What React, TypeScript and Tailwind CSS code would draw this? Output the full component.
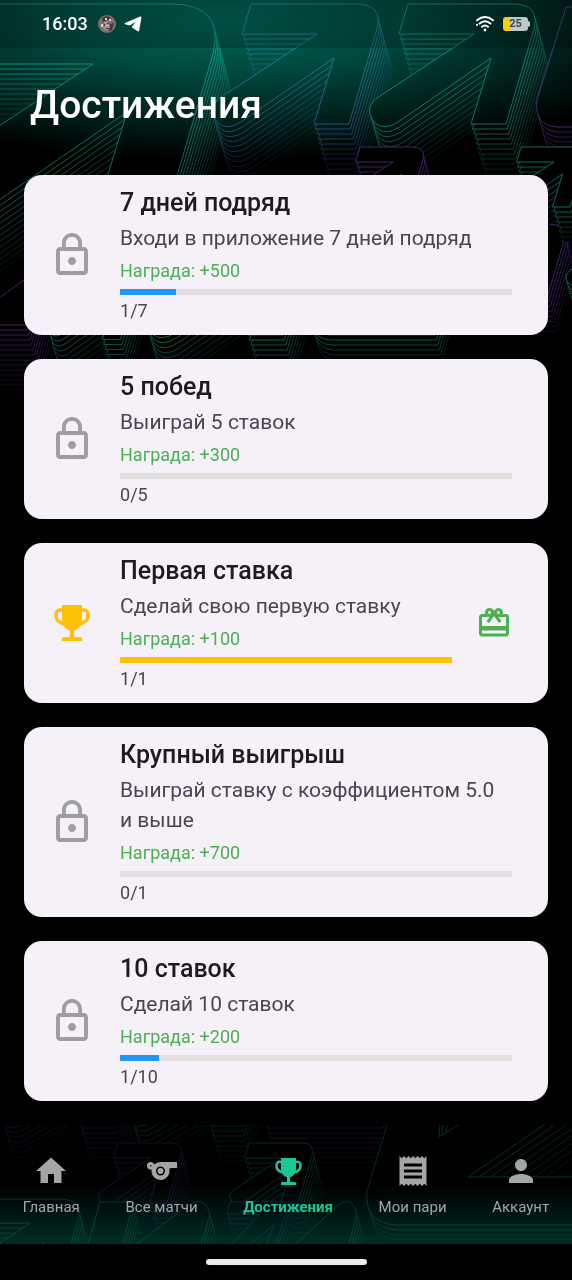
import React from 'react';
import { MdHome, MdLockOutline, MdPerson, MdReceipt, MdRedeem, MdSports } from 'react-icons/md';

type Achievement = {
  title: string;
  description: string;
  reward: number;
  current: number;
  total: number;
};

const achievements: Achievement[] = [
  { title: '7 дней подряд', description: 'Входи в приложение 7 дней подряд', reward: 500, current: 1, total: 7 },
  { title: '5 побед', description: 'Выиграй 5 ставок', reward: 300, current: 0, total: 5 },
  { title: 'Первая ставка', description: 'Сделай свою первую ставку', reward: 100, current: 1, total: 1 },
  // non-breaking space keeps the conjunction with its word
  { title: 'Крупный выигрыш', description: 'Выиграй ставку с коэффициентом 5.0 и\u00a0выше', reward: 700, current: 0, total: 1 },
  { title: '10 ставок', description: 'Сделай 10 ставок', reward: 200, current: 1, total: 10 },
];

const GREEN = '#107560';
const PURPLE = '#452877';
const BLUE = '#27457a';

const ARROW =
  'M408 4 H513 Q540 4 534 29 L506 124 H471 L491 58 L398 122 Q384 131 375 123 Q362 107 380 96 L474 34 H399 Z';

type ExtrudedProps = {
  d?: string;
  x?: number;
  y?: number;
  scale?: number;
  color: string;
  layers?: number;
};

// Outline with its copies stacked behind it, fading with depth
const Extruded: React.FC<ExtrudedProps> = ({ d = ARROW, x = 0, y = 0, scale = 1, color, layers = 11 }) => (
  <>
    {Array.from({ length: layers }, (_, i) => layers - 1 - i).map(i => (
      <path
        key={i}
        d={d}
        transform={`translate(${x + i * 1.4} ${y + i * 5}) scale(${scale})`}
        fill="#000"
        stroke={color}
        strokeOpacity={0.9 - (i / layers) * 0.8}
        vectorEffect="non-scaling-stroke"
      />
    ))}
  </>
);

const HeaderPattern: React.FC = () => (
  <svg
    className="absolute inset-x-0 top-0 w-full h-[400px]"
    viewBox="0 0 572 400"
    preserveAspectRatio="xMidYMin slice"
    aria-hidden="true"
  >
    <defs>
      <radialGradient id="glow" gradientUnits="userSpaceOnUse" cx="0" cy="0" r="1" gradientTransform="translate(225 20) scale(480 140)">
        <stop offset="0" stopColor="#006456" />
        <stop offset="0.35" stopColor="#004b40" />
        <stop offset="0.7" stopColor="#00231d" />
        <stop offset="1" stopColor="#000" />
      </radialGradient>
    </defs>
    <rect width="572" height="400" fill="#000" />
    <Extruded x={-855} y={-4} scale={2} color={GREEN} layers={13} />
    <Extruded x={-157} color={BLUE} />
    <Extruded x={0} color={GREEN} />
    <Extruded d="M566 7 L537 100 Q534 125 556 127 H620 V7 Z" color={PURPLE} layers={8} />
    <Extruded d="M-20 312 L40 268 L26 325 H-20 Z" color={PURPLE} layers={14} />
    <Extruded x={-144} y={270} scale={0.52} color={GREEN} layers={9} />
    <Extruded x={-223} y={211} color={GREEN} layers={9} />
    <Extruded d="M311 320 Q314 335 330 335 H435 L445 300 H311 Z" color={GREEN} layers={6} />
    <Extruded x={244} y={222} scale={0.6} color={PURPLE} layers={8} />
    <Extruded x={381} y={222} scale={0.5} color={GREEN} layers={8} />
    <Extruded x={156} y={145} scale={0.5} color={PURPLE} layers={8} />
    <Extruded x={317} y={145} scale={0.5} color={GREEN} layers={8} />
    <rect width="572" height="170" fill="url(#glow)" className="mix-blend-screen" />
  </svg>
);

const NavPattern: React.FC = () => (
  <svg
    className="absolute inset-0 w-full h-full"
    viewBox="0 0 572 119"
    preserveAspectRatio="xMidYMax slice"
    aria-hidden="true"
  >
    <defs>
      <linearGradient id="navGlow" x1="0" y1="0" x2="0" y2="1">
        <stop offset="0.5" stopColor="#000" />
        <stop offset="1" stopColor="#002c25" />
      </linearGradient>
    </defs>
    <g opacity="0.4">
      <Extruded d="M0 -15 Q4 4 22 -6 L60 -30 Z" color={PURPLE} layers={9} />
      <Extruded d="M80 -10 H116 L124 -40 H80 Z" y={8} color={PURPLE} layers={9} />
      <Extruded d="M130 -15 Q134 8 150 -2 L200 -30 Z" color={GREEN} layers={8} />
      <Extruded d="M209 -4 H240 L250 -40 H209 Z" color={GREEN} layers={9} />
      <Extruded d="M266 -2 H382 L392 -40 H266 Z" color={PURPLE} layers={10} />
      <Extruded d="M387 0 L367 66 Q364 98 396 100 H600 V-20 H393 Z" color={GREEN} layers={5} />
      {[0, 1, 2, 3, 4, 5, 6, 7].map(i => (
        <path key={i} d={`M${468 + i * 11} 52 L${544 + i * 11} 0`} stroke={GREEN} strokeOpacity={1 - i * 0.08} />
      ))}
      <path d="M468 52 H572 M440 0 L439 12 L458 0 M443 0 L442 9 M447 0 L446 7" stroke={GREEN} fill="none" />
      <Extruded x={-86} y={16} scale={0.5} color={PURPLE} layers={8} />
      <Extruded x={45} y={16} scale={0.5} color={GREEN} layers={9} />
      <Extruded x={-349} y={71} scale={0.8} color={GREEN} layers={8} />
      <Extruded d="M100 77 H133 L120 130 H85 Z" color={GREEN} layers={7} />
      <Extruded d="M125 128 L186 82 Q205 68 210 90 L198 130 Z" color={GREEN} layers={6} />
      <Extruded d="M230 77 H290 L272 130 H262 L274 100 L236 130 H222 L260 89 H227 Z" color={BLUE} layers={5} />
      <Extruded d="M284 130 L336 82 Q352 68 357 90 L346 130 Z" color={GREEN} layers={6} />
    </g>
    <rect width="572" height="119" fill="url(#navGlow)" className="mix-blend-screen" />
  </svg>
);

const Trophy: React.FC<{ className?: string }> = ({ className }) => (
  <svg className={className} viewBox="0 0 36 36" fill="currentColor" aria-hidden="true">
    <path d="M8 0 H28 V15 C28 21 24 24.5 20 25.5 V32 H26.5 Q28 32 28 33.5 V36 H8 V33.5 Q8 32 9.5 32 H16 V25.5 C12 24.5 8 21 8 15 Z" />
    <path
      d="M9 5.5 Q2 3.5 2 10 C2 15.5 6 18.5 11 19 M27 5.5 Q34 3.5 34 10 C34 15.5 30 18.5 25 19"
      fill="none"
      stroke="currentColor"
      strokeWidth="3.4"
    />
  </svg>
);

const StatusBar: React.FC = () => (
  <div className="relative flex h-12 items-center justify-between bg-black/20 px-[42px]">
    <div className="flex items-center gap-2">
      <span className="text-[18px] leading-6 font-medium">16:03</span>
      <svg className="ml-[2px] h-[18px] w-[18px]" viewBox="0 0 18 18" aria-hidden="true">
        <circle cx="9" cy="9" r="9" fill="#7d6f70" />
        <path d="M4 3 Q8 0 12 2 L13 6 L9 5 L5 7 Z M12 9 L16 8 L14 15 L11 16 Z" fill="#3f393d" />
        <path d="M6 7 Q9 5 11 8 L12 12 L9 16 L5 13 Z" fill="#a39390" />
        <path d="M7 3 h2 v2 h-2z M11 4 h2 v2 h-2z M3 9 h2 v3 h-2z M8 10 h2 v1 h-2z" fill="#d5cccb" />
        <path d="M6 9 h1 v2 h-1z M9 8 h2 v1 h-2z M8 13 h3 v1 h-3z" fill="#453b40" />
      </svg>
      <svg className="h-[18px] w-[18px]" viewBox="0 0 18 18" fill="#fff" aria-hidden="true">
        <path d="M1 8 L16.2 1.6 Q17.6 1.2 17.4 2.7 L15.2 15.5 Q14.8 17 13.4 16 L8 12.6 Q7.4 12 8 11.2 L12 6.8 L6.4 10 Q5.6 10.4 4.8 10.2 L1 9.2 Q0 8.6 1 8 Z" />
      </svg>
    </div>
    <div className="flex items-center gap-2">
      <svg className="h-[18px] w-[20px]" viewBox="0 0 20 18" fill="none" stroke="#fff" strokeWidth="2" strokeLinecap="round" aria-hidden="true">
        <path d="M2 5.2 Q10 -1.2 18 5.2" />
        <path d="M4.6 8.6 Q10 4 15.4 8.6" />
        <path d="M7 11.8 Q10 9.2 13 11.8" />
        <path d="M2 9.8 v.2" />
        <circle cx="10" cy="15" r="1.4" fill="#fff" stroke="none" />
      </svg>
      <div className="flex items-center">
        <div className="flex h-[14px] w-[25px] items-center justify-center rounded-[3px] bg-linear-to-r from-[#fccb0a] from-25% to-[#bcc9c6] to-25% text-[11px] leading-[14px] font-bold text-[#3a4543]">
          25
        </div>
        <div className="h-[6px] w-[2px] rounded-r-sm bg-[#bcc9c6]" />
      </div>
    </div>
  </div>
);

const AchievementCard: React.FC<{ item: Achievement }> = ({ item }) => {
  const done = item.current >= item.total;
  const percent = (item.current / item.total) * 100;

  return (
    <li className="flex items-center gap-6 rounded-[18px] bg-[#f6f1f9] py-3 pl-6 pr-9">
      <div className="flex w-12 shrink-0 justify-center">
        {done ? <Trophy className="h-9 w-9 text-[#ffc107]" /> : <MdLockOutline className="h-12 w-12 text-[#9e9e9e]" />}
      </div>

      <div className="min-w-0 flex-1">
        <h2 className="text-[25px] leading-8 font-medium text-[#1d1b20]">{item.title}</h2>
        <p className="mt-1 text-[21px] leading-[30px] text-[#49454f]">{item.description}</p>
        <p className="mt-[6px] text-[18px] leading-6 text-[#4caf50]">Награда: +{item.reward}</p>
        <div
          className="mt-[6px] h-[6px] bg-[#e0e0e0]"
          role="progressbar"
          aria-label={item.title}
          aria-valuenow={item.current}
          aria-valuemax={item.total}
        >
          <div className={done ? 'h-full bg-[#ffc107]' : 'h-full bg-[#2196f3]'} style={{ width: `${percent}%` }} />
        </div>
        <p className="mt-1 text-[18px] leading-6 text-[#49454f]">
          {item.current}/{item.total}
        </p>
      </div>

      {done && (
        <button type="button" aria-label="Забрать награду" className="shrink-0 text-[#4caf50]">
          <MdRedeem className="h-9 w-9" />
        </button>
      )}
    </li>
  );
};

const navItems = [
  { label: 'Главная', href: '#home', icon: <MdHome className="h-9 w-9" /> },
  { label: 'Все матчи', href: '#matches', icon: <MdSports className="h-9 w-9" /> },
  { label: 'Достижения', href: '#achievements', icon: <Trophy className="h-[27px] w-[27px]" />, active: true },
  { label: 'Мои пари', href: '#bets', icon: <MdReceipt className="h-9 w-9" /> },
  { label: 'Аккаунт', href: '#account', icon: <MdPerson className="h-9 w-9" /> },
];

const BottomNav: React.FC = () => (
  <div className="sticky bottom-0 bg-black">
    <nav className="relative overflow-hidden">
      <NavPattern />
      <div className="relative flex justify-around pt-7 pb-[25px]">
        {navItems.map(item => (
          <a
            key={item.label}
            href={item.href}
            className={
              item.active
                ? 'flex flex-col items-center gap-[6px] font-bold text-[#1bc797]'
                : 'flex flex-col items-center gap-[6px] text-[#a3a6a5]'
            }
          >
            <span className="flex h-9 items-center">{item.icon}</span>
            <span className="text-[15px] leading-6">{item.label}</span>
          </a>
        ))}
      </div>
    </nav>
    <div className="flex h-9 items-center justify-center">
      <div className="h-[6px] w-[161px] rounded-full bg-[#ececec]" />
    </div>
  </div>
);

export default function App() {
  return (
    <div className="relative flex min-h-screen flex-col bg-black font-[Roboto,sans-serif] text-white">
      <HeaderPattern />
      <StatusBar />
      <main className="relative flex-1 px-6 pb-6">
        <h1 className="px-[6px] pt-[33px] pb-[46px] text-[39px] leading-[48px] font-medium">Достижения</h1>
        <ul className="flex flex-col gap-6">
          {achievements.map(item => (
            <AchievementCard key={item.title} item={item} />
          ))}
        </ul>
      </main>
      <BottomNav />
    </div>
  );
}
